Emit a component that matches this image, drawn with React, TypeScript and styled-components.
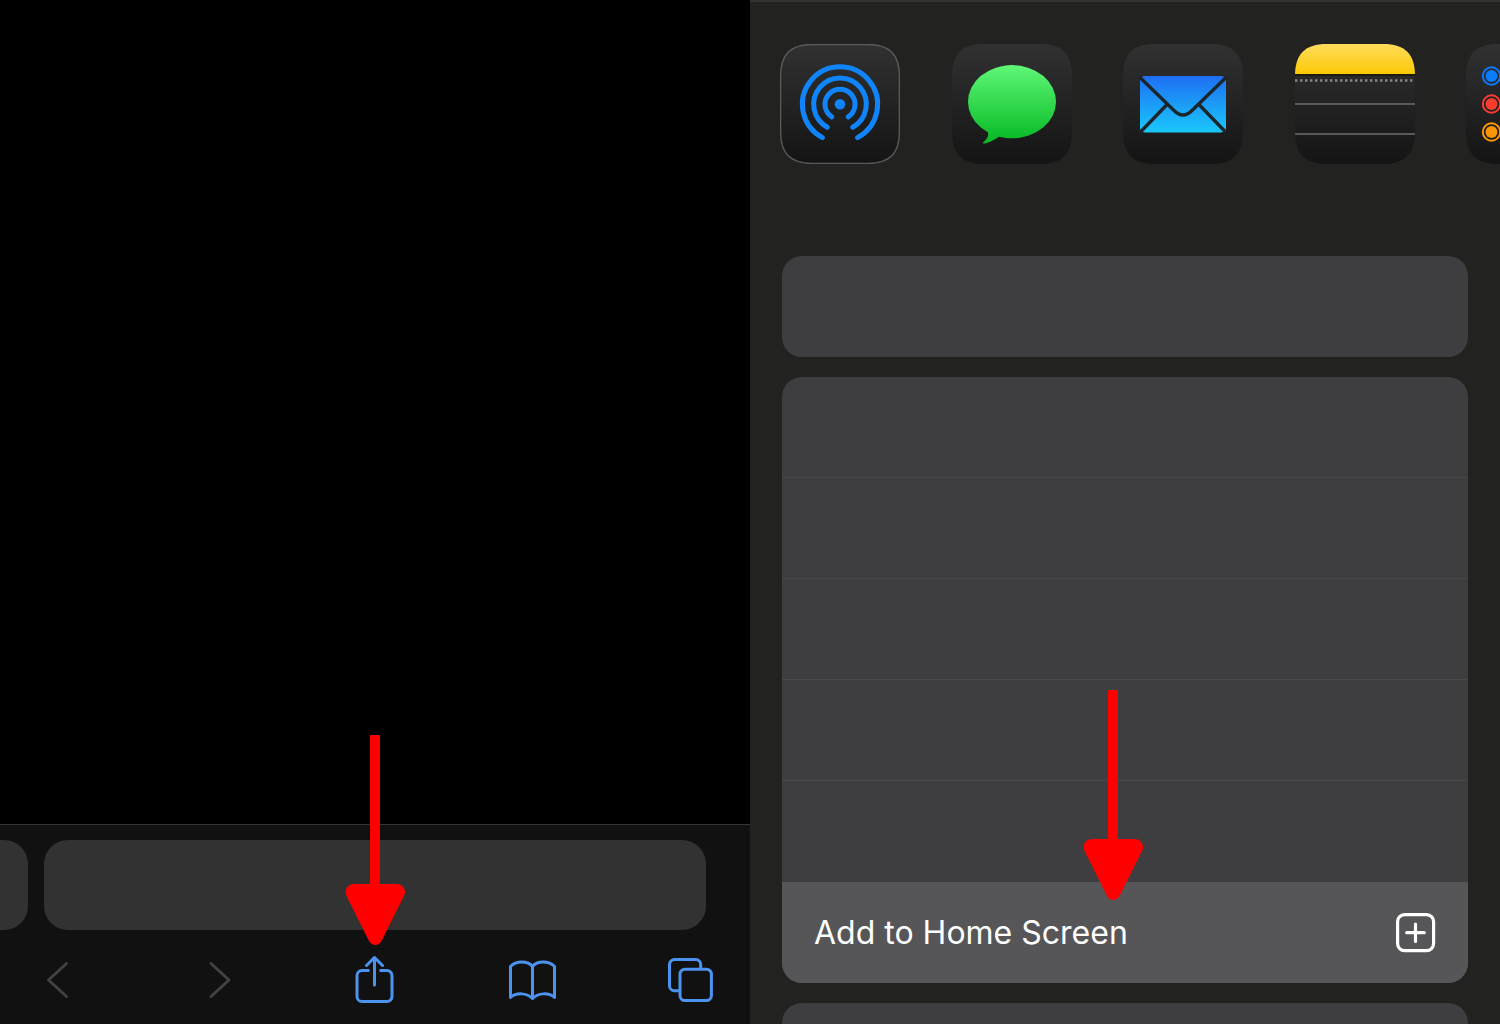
import React from "react";
import styled, { createGlobalStyle } from "styled-components";

const GlobalStyle = createGlobalStyle`
  *, *::before, *::after { box-sizing: border-box; }
  body {
    margin: 0;
    background: #000;
    font-family: Inter, "Liberation Sans", sans-serif;
  }
`;

const Screens = styled.main`
  display: grid;
  grid-template-columns: 1fr 1fr;
  height: 100vh;
`;

const Browser = styled.section`
  display: flex;
  flex-direction: column;
  min-width: 0;
  background: #000;
`;

const WebPage = styled.div`
  flex: 1;
`;

const BottomBar = styled.footer`
  position: relative;
  display: flex;
  flex-direction: column;
  gap: 26px;
  padding: 15px 0 20px;
  border-top: 1px solid #353535;
  background: #111;
`;

const TabStrip = styled.div`
  display: flex;
  gap: 16px;
  height: 90px;
  padding-right: 44px;
`;

const PreviousTab = styled.div`
  flex: 0 0 28px;
  border-radius: 0 24px 24px 0;
  background: #323232;
`;

const AddressField = styled.input`
  flex: 1;
  min-width: 0;
  padding: 0 32px;
  border: 0;
  border-radius: 24px;
  outline: none;
  background: #323232;
  color: #fff;
  font: inherit;
  font-size: 32px;
`;

const Tools = styled.nav`
  display: flex;
  justify-content: space-between;
  padding: 0 36px 0 33px;
`;

const ToolButton = styled.button<{ $muted?: boolean }>`
  width: 48px;
  height: 48px;
  padding: 0;
  border: 0;
  background: none;
  color: ${(p) => (p.$muted ? "#424242" : "#4c93f0")};

  svg {
    display: block;
  }
`;

const ShareSheet = styled.section`
  min-width: 0;
  overflow-x: hidden;
  overflow-y: auto;
  scrollbar-width: none;
  border-top: 2px solid #323232;
  background: #222221;
`;

const AppRow = styled.div`
  display: grid;
  grid-auto-flow: column;
  grid-auto-columns: 23.83%;
  margin: 42px 0 92px 30px;
`;

const AppButton = styled.button`
  width: 120px;
  height: 120px;
  padding: 0;
  border: 0;
  background: none;

  svg {
    display: block;
  }
`;

const Cards = styled.div`
  display: flex;
  flex-direction: column;
  gap: 20px;
  padding: 0 32px 32px;
`;

const Card = styled.ul`
  margin: 0;
  padding: 0;
  overflow: hidden;
  list-style: none;
  border-radius: 20px;
  background: #3e3e40;
`;

const Row = styled.li<{ $divided?: boolean }>`
  position: relative;
  height: 101px;
  border-bottom: ${(p) => (p.$divided ? "1px solid #49494b" : "0")};
`;

const ActionButton = styled.button`
  display: flex;
  align-items: center;
  justify-content: space-between;
  width: 100%;
  height: 100%;
  padding: 0 32px;
  border: 0;
  background: #565658;
  color: #fff;
  font: inherit;
  font-size: 32px;
  line-height: 40px;
`;

const SharePointer = styled.div`
  position: absolute;
  bottom: 79px;
  left: 50%;
  margin-left: -30px;
  pointer-events: none;
`;

const HomePointer = styled.div`
  position: absolute;
  bottom: 83px;
  left: 43.9%;
  pointer-events: none;
`;

const Arrow = () => (
  <svg width="60" height="210" viewBox="0 0 60 210" fill="#f00" display="block" aria-hidden="true">
    <path d="M25 0H35V149H51.5C58 149 62 155 59 161L37.500 204C34 212 26.500 212 23 204L1.500 161C-1 155 2.500 149 9 149H25Z" />
  </svg>
);

const ToolIcon = ({ children }: { children: React.ReactNode }) => (
  <svg
    width="48"
    height="48"
    viewBox="0 0 48 48"
    fill="none"
    stroke="currentColor"
    strokeWidth="3"
    strokeLinecap="round"
    strokeLinejoin="round"
    aria-hidden="true"
  >
    {children}
  </svg>
);

const TILE =
  "M0 32C0 10 10 0 32 0H88C110 0 120 10 120 32V88C120 110 110 120 88 120H32C10 120 0 110 0 88Z";

const AppIcon = ({ id, children }: { id: string; children: React.ReactNode }) => (
  <svg width="120" height="120" viewBox="0 0 120 120" fill="none" aria-hidden="true">
    <defs>
      <linearGradient id={`${id}-tile`} x1="0" y1="0" x2="0" y2="1">
        <stop offset="0" stopColor="#313131" />
        <stop offset="1" stopColor="#141414" />
      </linearGradient>
      <clipPath id={`${id}-clip`}>
        <path d={TILE} />
      </clipPath>
    </defs>
    <path d={TILE} fill={`url(#${id}-tile)`} />
    <g clipPath={`url(#${id}-clip)`}>{children}</g>
  </svg>
);

const AirDrop = () => (
  <AppIcon id="airdrop">
    <path d={TILE} stroke="#5a5a5b" strokeWidth="2.6" />
    <circle cx="60" cy="60.3" r="5.3" fill="#0f84fb" />
    <g stroke="#0f84fb" strokeWidth="5" strokeLinecap="round">
      <path d="M51.700 72.800A15 15 0 1 1 68.300 72.800" />
      <path d="M47.200 83.200A26.300 26.300 0 1 1 72.800 83.200" />
      <path d="M42.400 93.600A37.600 37.600 0 1 1 77.600 93.600" />
    </g>
  </AppIcon>
);

const Messages = () => (
  <AppIcon id="messages">
    <defs>
      <linearGradient id="bubble" gradientUnits="userSpaceOnUse" x1="0" y1="21" x2="0" y2="96">
        <stop offset="0" stopColor="#5ff777" />
        <stop offset="1" stopColor="#09bb27" />
      </linearGradient>
    </defs>
    <g fill="url(#bubble)">
      <ellipse cx="60" cy="57.7" rx="44" ry="36.6" />
      <path d="M33 85C38.500 88.500 36.500 94 31.500 98C30.500 99 31 99.800 32.500 99.500C39 98 43 95.500 47 92.800L52 88Z" />
    </g>
  </AppIcon>
);

const Mail = () => (
  <AppIcon id="mail">
    <defs>
      <linearGradient id="envelope" x1="0" y1="0" x2="0" y2="1">
        <stop offset="0" stopColor="#1e6ff2" />
        <stop offset="1" stopColor="#1ac8fc" />
      </linearGradient>
    </defs>
    <rect x="17" y="32" width="86" height="56.5" rx="5" fill="url(#envelope)" />
    <g stroke="#1b262c" strokeWidth="3.3">
      <path d="M16 32.500L51 66.500Q60 75.500 69 66.500L104 32.500" />
      <path d="M44 60.500L17 88.500M76 60.500L103 88.500" />
    </g>
  </AppIcon>
);

const Notes = () => (
  <AppIcon id="notes">
    <defs>
      <linearGradient id="binding" x1="0" y1="0" x2="0" y2="1">
        <stop offset="0" stopColor="#ffdc5c" />
        <stop offset="1" stopColor="#fdc905" />
      </linearGradient>
    </defs>
    <rect width="120" height="30" fill="url(#binding)" />
    <path d="M0 31H120" stroke="#1c1a12" strokeWidth="2" />
    <path d="M0 36.500H120" stroke="#858585" strokeWidth="2.4" strokeDasharray="2.4 2.6" />
    <path d="M0 60H120M0 90H120" stroke="#59595b" strokeWidth="2" />
  </AppIcon>
);

const Reminders = () => (
  <AppIcon id="reminders">
    {[
      { y: 32, color: "#0a7bfd" },
      { y: 60, color: "#fd3c31" },
      { y: 88, color: "#fd9606" },
    ].map(({ y, color }) => (
      <g key={color}>
        <circle cx="25.5" cy={y} r="8.7" stroke={color} strokeWidth="2" />
        <circle cx="25.5" cy={y} r="6" fill={color} />
      </g>
    ))}
  </AppIcon>
);

const apps = [
  { name: "AirDrop", Icon: AirDrop },
  { name: "Messages", Icon: Messages },
  { name: "Mail", Icon: Mail },
  { name: "Notes", Icon: Notes },
  { name: "Reminders", Icon: Reminders },
];

export default function App() {
  return (
    <>
      <GlobalStyle />
      <Screens>
        <Browser>
          <WebPage />
          <BottomBar>
            <TabStrip>
              <PreviousTab />
              <AddressField type="text" aria-label="Address" />
            </TabStrip>
            <Tools>
              <ToolButton type="button" aria-label="Back" $muted>
                <ToolIcon>
                  <path d="M33.500 7.500L15.500 24L33.500 40.500" />
                </ToolIcon>
              </ToolButton>
              <ToolButton type="button" aria-label="Forward" $muted>
                <ToolIcon>
                  <path d="M20 7.500L38 24L20 40.500" />
                </ToolIcon>
              </ToolButton>
              <ToolButton type="button" aria-label="Share">
                <ToolIcon>
                  <path
                    strokeLinecap="butt"
                    d="M19.500 14.500H12A5 5 0 0 0 7 19.500V40.500A5 5 0 0 0 12 45.500H37A5 5 0 0 0 42 40.500V19.500A5 5 0 0 0 37 14.500H29.500"
                  />
                  <path d="M24.500 29V1.500M16.500 9.500L24.500 1.500L32.500 9.500" />
                </ToolIcon>
              </ToolButton>
              <ToolButton type="button" aria-label="Bookmarks">
                <ToolIcon>
                  <path d="M24.500 10.500C20 4.500 8 4.500 2.500 10.500V41.500C8 36.500 19 36.500 24.500 42.500C30 36.500 41 36.500 46.500 41.500V10.500C41 4.500 29 4.500 24.500 10.500V42.500" />
                </ToolIcon>
              </ToolButton>
              <ToolButton type="button" aria-label="Tabs">
                <ToolIcon>
                  <rect x="14" y="13.2" width="31.4" height="31.4" rx="5" />
                  <path
                    strokeLinecap="butt"
                    d="M34.700 12V8.500A5 5 0 0 0 29.700 3.500H8.500A5 5 0 0 0 3.500 8.500V29.700A5 5 0 0 0 8.500 34.700H13"
                  />
                </ToolIcon>
              </ToolButton>
            </Tools>
            <SharePointer>
              <Arrow />
            </SharePointer>
          </BottomBar>
        </Browser>

        <ShareSheet>
          <AppRow>
            {apps.map(({ name, Icon }) => (
              <AppButton key={name} type="button" aria-label={name}>
                <Icon />
              </AppButton>
            ))}
          </AppRow>
          <Cards>
            <Card>
              <Row />
            </Card>
            <Card>
              <Row $divided />
              <Row $divided />
              <Row $divided />
              <Row $divided />
              <Row />
              <Row>
                <ActionButton type="button">
                  Add to Home Screen
                  <svg
                    width="41"
                    height="41"
                    viewBox="0 0 41 41"
                    fill="none"
                    stroke="#fff"
                    strokeWidth="3.2"
                    strokeLinecap="round"
                    aria-hidden="true"
                  >
                    <rect x="2.6" y="2.6" width="36" height="36" rx="7" />
                    <path d="M20.500 12V29.500M11.700 20.700H29.300" />
                  </svg>
                </ActionButton>
                <HomePointer>
                  <Arrow />
                </HomePointer>
              </Row>
            </Card>
            <Card>
              <Row />
            </Card>
          </Cards>
        </ShareSheet>
      </Screens>
    </>
  );
}
